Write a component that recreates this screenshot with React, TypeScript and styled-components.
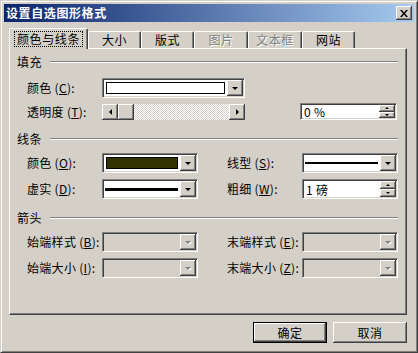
import styled, { createGlobalStyle } from "styled-components";

const GlobalStyle = createGlobalStyle`
  html, body {
    margin: 0;
    padding: 0;
    background: #d4d0c8;
  }
  body {
    font-family: "Noto Sans CJK SC", "Noto Sans", sans-serif;
    font-size: 12px;
    color: #000;
  }
`;

const FACE = "#d4d0c8";

const Window = styled.div`
  width: 418px;
  height: 353px;
  box-sizing: border-box;
  background: ${FACE};
  border: 1px solid;
  border-color: ${FACE} #404040 #404040 ${FACE};
  box-shadow: inset 1px 1px #fff, inset -1px -1px #808080;
  padding: 3px;
  display: flex;
  flex-direction: column;
`;

const TitleBar = styled.div`
  height: 18px;
  flex: none;
  background: linear-gradient(to right, #0a246a, #a6caf0);
  display: flex;
  align-items: center;
  justify-content: space-between;
  padding: 0 2px 0 2px;
`;

const Title = styled.span`
  color: #fff;
  font-weight: bold;
  font-size: 12px;
  letter-spacing: 0.6px;
  line-height: 14px;
`;

const raised = `
  background: ${FACE};
  box-shadow: inset -1px -1px #404040, inset 1px 1px #fff, inset -2px -2px #808080;
`;

const CloseBtn = styled.div`
  width: 16px;
  height: 14px;
  ${raised}
  display: flex;
  align-items: center;
  justify-content: center;
`;

const Body = styled.div`
  flex: 1;
  display: flex;
  flex-direction: column;
  padding: 6px 7px 6px 5px;
`;

const TabRow = styled.div`
  height: 20px;
  display: flex;
  align-items: flex-end;
  flex: none;
`;

const Tab = styled.div<{ $w: number; $active?: boolean; $disabled?: boolean }>`
  width: ${(p) => p.$w}px;
  height: ${(p) => (p.$active ? 21 : 17)}px;
  margin-bottom: ${(p) => (p.$active ? -1 : 0)}px;
  box-sizing: border-box;
  border-top: 1px solid #fff;
  border-left: 1px solid #fff;
  border-right: 1px solid #404040;
  box-shadow: inset -1px 0 #808080;
  border-radius: 2px 2px 0 0;
  background: ${FACE};
  display: flex;
  align-items: center;
  justify-content: center;
  position: relative;
  z-index: ${(p) => (p.$active ? 1 : 0)};
  color: ${(p) => (p.$disabled ? "#808080" : "#000")};
  text-shadow: ${(p) => (p.$disabled ? "1px 1px #fff" : "none")};
  letter-spacing: 0.6px;
  line-height: 14px;
`;

const FocusLabel = styled.span`
  outline: 1px dotted #000;
  padding: 0 2px;
`;

const Panel = styled.div`
  height: 267px;
  flex: none;
  box-sizing: border-box;
  border: 1px solid;
  border-color: #fff #404040 #404040 #fff;
  box-shadow: inset -1px -1px #808080;
  display: flex;
  flex-direction: column;
`;

const GroupHead = styled.div<{ $top: number }>`
  margin-top: ${(p) => p.$top}px;
  height: 14px;
  display: flex;
  align-items: center;
  padding: 0 8px 0 7px;
  letter-spacing: 0.6px;
  line-height: 14px;
`;

const Etch = styled.div`
  flex: 1;
  height: 0;
  margin-left: 8px;
  border-top: 1px solid #808080;
  border-bottom: 1px solid #fff;
`;

const Row = styled.div<{ $top: number; $h?: number }>`
  margin-top: ${(p) => p.$top}px;
  height: ${(p) => p.$h ?? 20}px;
  display: grid;
  grid-template-columns: 75px 125px 75px auto;
  align-items: center;
  padding-left: 17px;
`;

const Label = styled.span`
  white-space: nowrap;
  line-height: 14px;
  letter-spacing: 0.3px;
`;

const Key = styled.u`
  text-underline-offset: 1px;
`;

const sunken = `
  box-sizing: border-box;
  border: 1px solid;
  border-color: #808080 #fff #fff #808080;
  box-shadow: inset 1px 1px #404040, inset -1px -1px ${FACE};
  padding: 1px;
`;

const Combo = styled.div<{ $w: number; $disabled?: boolean; $span?: boolean }>`
  ${sunken}
  width: ${(p) => p.$w}px;
  height: 20px;
  background: ${(p) => (p.$disabled ? FACE : "#fff")};
  display: flex;
  grid-column: ${(p) => (p.$span ? "2 / 4" : "auto")};
`;

const ComboField = styled.div`
  flex: 1;
  display: flex;
  align-items: center;
  padding: 0 2px;
`;

const Swatch = styled.div<{ $color: string }>`
  flex: 1;
  height: 12px;
  box-sizing: border-box;
  border: 1px solid #000;
  background: ${(p) => p.$color};
`;

const LineSample = styled.div<{ $thick: number }>`
  flex: 1;
  height: ${(p) => p.$thick}px;
  background: #000;
  margin-left: -1px;
`;

const ArrowBtn = styled.div`
  width: 16px;
  height: 16px;
  flex: none;
  ${raised}
  display: flex;
  align-items: center;
  justify-content: center;
`;

const Tri = styled.div<{ $dir: "down" | "up" | "left" | "right"; $size?: number; $disabled?: boolean }>`
  width: 0;
  height: 0;
  border-style: solid;
  ${(p) => {
    const s = p.$size ?? 4;
    const c = p.$disabled ? "#808080" : "#000";
    if (p.$dir === "down") return `border-width:${s}px ${s}px 0 ${s}px; border-color:${c} transparent transparent transparent; margin-left:-1px;`;
    if (p.$dir === "up") return `border-width:0 ${s}px ${s}px ${s}px; border-color:transparent transparent ${c} transparent; margin-left:-1px;`;
    if (p.$dir === "left") return `border-width:${s}px ${s}px ${s}px 0; border-color:transparent ${c} transparent transparent; margin-top:-1px;`;
    return `border-width:${s}px 0 ${s}px ${s}px; border-color:transparent transparent transparent ${c}; margin-top:-1px;`;
  }}
  ${(p) => (p.$disabled ? "filter: drop-shadow(1px 1px 0 #fff);" : "")}
`;

const ScrollBar = styled.div`
  grid-column: 2 / 4;
  width: 143px;
  height: 16px;
  display: flex;
  align-self: start;
  margin-top: 1px;
`;

const Track = styled.div`
  flex: 1;
  background: repeating-conic-gradient(#fff 0 25%, ${FACE} 0 50%) 0 0 / 2px 2px;
`;

const Thumb = styled.div`
  width: 16px;
  height: 16px;
  ${raised}
`;

const Spin = styled.div<{ $w: number; $h: number; $shift?: number }>`
  ${sunken}
  width: ${(p) => p.$w}px;
  height: ${(p) => p.$h}px;
  margin-left: ${(p) => p.$shift ?? 0}px;
  background: #fff;
  display: flex;
  align-self: start;
`;

const SpinText = styled.div`
  flex: 1;
  display: flex;
  align-items: center;
  padding-left: 2px;
  line-height: 13px;
  letter-spacing: 0.3px;
  white-space: pre;
`;

const SpinBtns = styled.div`
  width: 16px;
  display: flex;
  flex-direction: column;
`;

const SpinBtn = styled.div`
  flex: 1;
  ${raised}
  display: flex;
  align-items: center;
  justify-content: center;
`;

const ButtonRow = styled.div`
  margin-top: 7px;
  height: 21px;
  display: flex;
  justify-content: flex-end;
  gap: 6px;
`;

const Button = styled.div<{ $default?: boolean }>`
  width: 74px;
  height: 21px;
  box-sizing: border-box;
  background: ${FACE};
  display: flex;
  align-items: center;
  justify-content: center;
  letter-spacing: 0.6px;
  line-height: 14px;
  border: ${(p) => (p.$default ? "1px solid #000" : "none")};
  box-shadow: inset -1px -1px #404040, inset 1px 1px #fff, inset -2px -2px #808080;
`;

const Mn = ({ t, k }: { t: string; k: string }) => (
  <Label>
    {t} (<Key>{k}</Key>):
  </Label>
);

const DropArrow = ({ disabled }: { disabled?: boolean }) => (
  <ArrowBtn>
    <Tri $dir="down" $size={3.5} $disabled={disabled} />
  </ArrowBtn>
);

const SpinBox = ({ text, w, h, shift }: { text: string; w: number; h: number; shift?: number }) => (
  <Spin $w={w} $h={h} $shift={shift}>
    <SpinText>{text}</SpinText>
    <SpinBtns>
      <SpinBtn>
        <Tri $dir="up" $size={2.5} />
      </SpinBtn>
      <SpinBtn>
        <Tri $dir="down" $size={2.5} />
      </SpinBtn>
    </SpinBtns>
  </Spin>
);

const tabs = [
  { name: "颜色与线条", w: 79, active: true },
  { name: "大小", w: 53 },
  { name: "版式", w: 53 },
  { name: "图片", w: 54, disabled: true },
  { name: "文本框", w: 54, disabled: true },
  { name: "网站", w: 53 },
];

export default function App() {
  return (
    <>
      <GlobalStyle />
      <Window>
        <TitleBar>
          <Title>设置自选图形格式</Title>
          <CloseBtn>
            <svg width="8" height="7" viewBox="0 0 8 7">
              <path d="M0 0h2l2 2.5L6 0h2L5 3.5 8 7H6L4 4.5 2 7H0l3-3.5z" fill="#000" />
            </svg>
          </CloseBtn>
        </TitleBar>
        <Body>
          <TabRow>
            {tabs.map((t) => (
              <Tab key={t.name} $w={t.w} $active={t.active} $disabled={t.disabled}>
                {t.active ? <FocusLabel>{t.name}</FocusLabel> : t.name}
              </Tab>
            ))}
          </TabRow>
          <Panel>
            <GroupHead $top={6}>
              填充
              <Etch />
            </GroupHead>
            <Row $top={9}>
              <Mn t="颜色" k="C" />
              <Combo $w={143} $span>
                <ComboField>
                  <Swatch $color="#fff" />
                </ComboField>
                <DropArrow />
              </Combo>
            </Row>
            <Row $top={5} $h={17}>
              <Mn t="透明度" k="T" />
              <ScrollBar>
                <ArrowBtn>
                  <Tri $dir="left" $size={3} />
                </ArrowBtn>
                <Thumb />
                <Track />
                <ArrowBtn>
                  <Tri $dir="right" $size={3} />
                </ArrowBtn>
              </ScrollBar>
              <SpinBox text="0 %" w={97} h={17} shift={-2} />
            </Row>

            <GroupHead $top={12}>
              线条
              <Etch />
            </GroupHead>
            <Row $top={7}>
              <Mn t="颜色" k="O" />
              <Combo $w={96}>
                <ComboField>
                  <Swatch $color="#333300" />
                </ComboField>
                <DropArrow />
              </Combo>
              <Mn t="线型" k="S" />
              <Combo $w={96}>
                <ComboField>
                  <LineSample $thick={2} />
                </ComboField>
                <DropArrow />
              </Combo>
            </Row>
            <Row $top={6}>
              <Mn t="虚实" k="D" />
              <Combo $w={96}>
                <ComboField>
                  <LineSample $thick={3} />
                </ComboField>
                <DropArrow />
              </Combo>
              <Mn t="粗细" k="W" />
              <SpinBox text="1 磅" w={96} h={20} />
            </Row>

            <GroupHead $top={12}>
              箭头
              <Etch />
            </GroupHead>
            <Row $top={7}>
              <Mn t="始端样式" k="B" />
              <Combo $w={96} $disabled>
                <ComboField />
                <DropArrow disabled />
              </Combo>
              <Mn t="末端样式" k="E" />
              <Combo $w={96} $disabled>
                <ComboField />
                <DropArrow disabled />
              </Combo>
            </Row>
            <Row $top={6}>
              <Mn t="始端大小" k="I" />
              <Combo $w={96} $disabled>
                <ComboField />
                <DropArrow disabled />
              </Combo>
              <Mn t="末端大小" k="Z" />
              <Combo $w={96} $disabled>
                <ComboField />
                <DropArrow disabled />
              </Combo>
            </Row>
          </Panel>
          <ButtonRow>
            <Button $default>确定</Button>
            <Button>取消</Button>
          </ButtonRow>
        </Body>
      </Window>
    </>
  );
}
